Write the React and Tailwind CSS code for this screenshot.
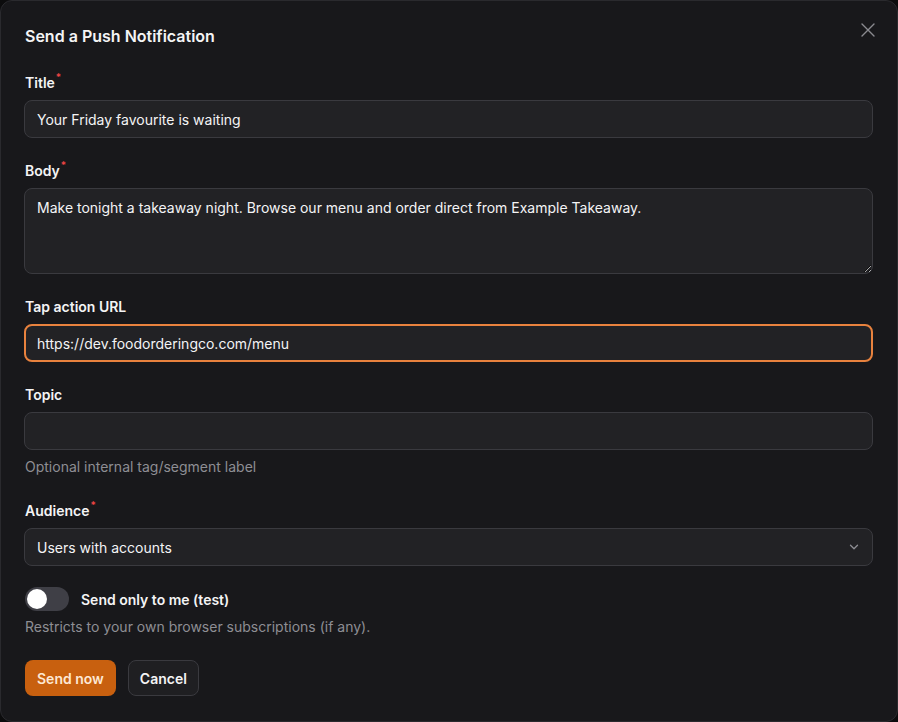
import React from "react";

const font = { fontFamily: "Inter, 'Noto Sans', sans-serif" };

function Label({ children, required }) {
  return (
    <div className="flex items-start h-5 pl-px text-[14px] leading-5 font-semibold text-[#f4f4f5]">
      <span>{children}</span>
      {required && <span className="text-[#ef4444] text-[10px] leading-none ml-[1px] -mt-[1px]">*</span>}
    </div>
  );
}

function Input({ value, focused }) {
  return (
    <input
      readOnly
      value={value}
      className={
        "w-full h-[38px] rounded-lg bg-[#222225] px-3 text-[14px] text-[#f4f4f5] outline-none " +
        (focused ? "border-2 border-[#e8823e] px-[11px]" : "border border-[#3a3a3f]")
      }
      style={font}
    />
  );
}

export default function App() {
  return (
    <div className="w-[898px] h-[722px] bg-[#0c0c0d] overflow-hidden" style={font}>
      <div className="relative w-[898px] h-[722px] bg-[#18181b] border border-[#2a2a2e] rounded-xl pl-[23px] pr-6 pt-[23px]">
        <button className="absolute right-[21px] top-[21px] text-[#8a8a90]">
          <svg width="16" height="16" viewBox="0 0 16 16" fill="none" stroke="currentColor" strokeWidth="1.4" strokeLinecap="round">
            <path d="M2 2L14 14M14 2L2 14" />
          </svg>
        </button>
        <h2 className="pl-px text-[16px] leading-6 font-semibold text-[#f4f4f5]">Send a Push Notification</h2>

        <div className="mt-[25px] flex flex-col">
          <div className="flex flex-col gap-[7px]">
            <Label required>Title</Label>
            <Input value="Your Friday favourite is waiting" />
          </div>

          <div className="flex flex-col gap-[7px] mt-[23px]">
            <Label required>Body</Label>
            <textarea
              readOnly
              value="Make tonight a takeaway night. Browse our menu and order direct from Example Takeaway."
              className="w-full h-[86px] rounded-lg bg-[#222225] border border-[#3a3a3f] px-3 py-[9px] text-[14px] leading-5 text-[#f4f4f5] outline-none"
              style={font}
            />
          </div>

          <div className="flex flex-col gap-[7px] mt-[23px]">
            <Label>Tap action URL</Label>
            <Input value="https://dev.foodorderingco.com/menu" focused />
          </div>

          <div className="flex flex-col gap-[7px] mt-[23px]">
            <Label>Topic</Label>
            <Input value="" />
            <div className="pl-px text-[14px] leading-5 text-[#8e8e94]">Optional internal tag/segment label</div>
          </div>

          <div className="flex flex-col gap-[7px] mt-6">
            <Label required>Audience</Label>
            <div className="w-full h-[38px] rounded-lg bg-[#222225] border border-[#3a3a3f] px-3 flex items-center justify-between">
              <span className="text-[14px] text-[#f4f4f5]">Users with accounts</span>
              <svg width="14" height="14" viewBox="0 0 16 16" fill="none" stroke="#8e8e94" strokeWidth="1.5" strokeLinecap="round" strokeLinejoin="round" className="-mr-[1px]">
                <path d="M4 6l4 4 4-4" />
              </svg>
            </div>
          </div>

          <div className="flex flex-col gap-[6px] mt-[21px] pl-px">
            <div className="flex items-center gap-3 h-6">
              <div className="w-11 h-6 rounded-full bg-[#3f3f46] p-[2px] flex items-center">
                <div className="w-5 h-5 rounded-full bg-white" />
              </div>
              <span className="text-[14px] font-semibold text-[#f4f4f5]">Send only to me (test)</span>
            </div>
            <div className="text-[14px] leading-5 text-[#8e8e94]">Restricts to your own browser subscriptions (if any).</div>
          </div>

          <div className="flex gap-3 mt-[23px] pl-px">
            <button className="h-9 px-3 rounded-lg bg-[#c8600f] text-[14px] font-semibold text-[#fde8d4]">Send now</button>
            <button className="h-9 px-[11px] rounded-lg bg-[#1f1f22] border border-[#3a3a3f] text-[14px] font-semibold text-[#f4f4f5]">Cancel</button>
          </div>
        </div>
      </div>
    </div>
  );
}
